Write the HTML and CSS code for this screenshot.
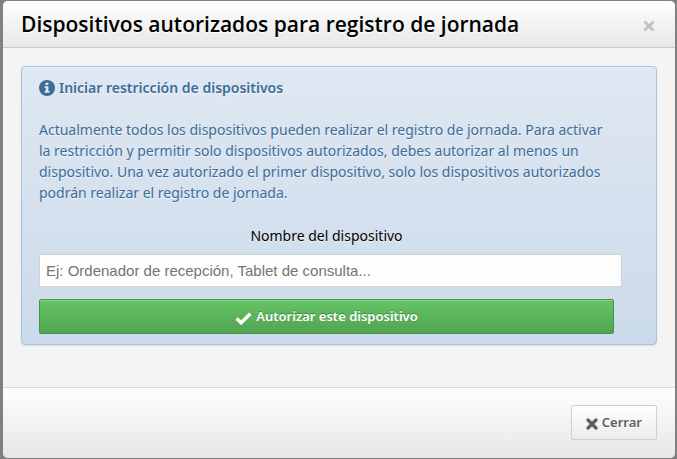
FILE: index.html
```
<!DOCTYPE html>
<html lang="es">
<head>
    <meta charset="UTF-8">
    <meta name="viewport" content="width=device-width, initial-scale=1.0">
    <title>Dispositivos autorizados para registro de jornada</title>
    <link rel="stylesheet" href="styles.css">
</head>
<body>
    <div class="modal" role="dialog" aria-labelledby="modal-title">
        <div class="modal-header">
            <h3 id="modal-title">Dispositivos autorizados para registro de jornada</h3>
            <button type="button" class="close" aria-label="Cerrar ventana">
                <svg width="14" height="12" viewBox="0 0 14 12"><path d="M1.5 1.5l9 9M10.5 1.5l-9 9" fill="none" stroke="currentColor" stroke-width="2.8"/></svg>
            </button>
        </div>
        <div class="modal-body">
            <form class="alert alert-info">
                <h4>
                    <svg class="icon" width="16" height="16" viewBox="0 0 16 16"><circle cx="8" cy="8" r="8" fill="currentColor"/><path d="M6.6 2.8h2.8v2.2H6.6zM5.6 6.3h3.8v4.8h1.1v1.7H5.6v-1.7h1.1V8H5.6z" fill="#dfe8f1"/></svg>
                    Iniciar restricción de dispositivos
                </h4>
                <p>Actualmente todos los dispositivos pueden realizar el registro de jornada. Para activar la restricción y permitir solo dispositivos autorizados, debes autorizar al menos un dispositivo. Una vez autorizado el primer dispositivo, solo los dispositivos autorizados podrán realizar el registro de jornada.</p>
                <label for="device-name">Nombre del dispositivo</label>
                <input type="text" id="device-name" placeholder="Ej: Ordenador de recepción, Tablet de consulta...">
                <button type="button" class="btn btn-success">
                    <svg class="icon" width="17" height="13" viewBox="0 0 17 13"><path d="M1.6 6.4l4.6 4.4L15.3 1.7" fill="none" stroke="currentColor" stroke-width="3.4"/></svg>
                    Autorizar este dispositivo
                </button>
            </form>
        </div>
        <div class="modal-footer">
            <button type="button" class="btn">
                <svg class="icon" width="12" height="12" viewBox="0 0 12 12"><path d="M2 2l8 8M10 2l-8 8" fill="none" stroke="currentColor" stroke-width="3.2" stroke-linecap="round"/></svg>
                Cerrar
            </button>
        </div>
    </div>
</body>
</html>
```
FILE: styles.css
```
* {
    box-sizing: border-box;
}

body {
    margin: 0;
    padding: 1px 2px 1px 3px;
    min-height: 100vh;
    display: flex;
    background: #808080;
    font-family: "Noto Sans", "Open Sans", sans-serif;
    font-size: 14px;
    line-height: 21px;
    color: #000;
}

.modal {
    flex: 1;
    display: flex;
    flex-direction: column;
    background: #f4f4f4;
    border-radius: 5px;
    overflow: hidden;
}

.modal-header {
    display: flex;
    align-items: center;
    justify-content: space-between;
    padding: 8px 18px;
    background: linear-gradient(#fefefe, #e7e7e7);
    border-bottom: 1px solid #c9c9c9;
}

.modal-header h3 {
    margin: 0;
    font-family: "Open Sans", sans-serif;
    font-size: 21px;
    font-weight: 600;
    line-height: 30px;
    text-shadow: 0 1px 0 #fff;
}

.close {
    display: flex;
    margin-top: 3px;
    padding: 0;
    border: 0;
    background: none;
    color: #c2c2c2;
    cursor: pointer;
}

.modal-body {
    flex: 1;
    padding: 18px;
}

.alert {
    display: flex;
    flex-direction: column;
    padding: 10px 42px 10px 17px;
    border: 1px solid #a6c3de;
    border-radius: 4px;
    text-shadow: 0 1px 0 rgba(255, 255, 255, 0.6);
    box-shadow: inset 0 1px 0 rgba(255, 255, 255, 0.3), 0 1px 2px rgba(0, 0, 0, 0.1);
}

.alert-info {
    background: linear-gradient(#dfe8f2, #cbdaea);
    color: #3d6c99;
}

.alert h4 {
    display: flex;
    align-items: center;
    gap: 4px;
    margin: 0;
    font-size: 14px;
    font-weight: 600;
}

.alert p {
    margin: 21px 0;
}

.alert label {
    margin: 1px 0 8px;
    text-align: center;
    color: #000;
}

/* the text box is a little wider than its column */
.alert input {
    height: 33px;
    margin: 0 -8px 12px 0;
    padding: 0 6px;
    border: 1px solid #d2d2d2;
    background: #fdfdfd;
    font-family: "Liberation Sans", Arial, sans-serif;
    font-size: 15px;
}

.alert input::placeholder {
    color: #757575;
    opacity: 1;
}

.btn {
    display: flex;
    align-items: center;
    justify-content: center;
    gap: 4px;
    height: 35px;
    padding: 0 14px;
    border: 1px solid #cfcfcf;
    border-radius: 2px;
    background: linear-gradient(#fefefe, #ececec);
    color: #5e5e5e;
    font-family: inherit;
    font-size: 13px;
    font-weight: 600;
    line-height: 21px;
    text-shadow: 0 1px 0 #fff;
    cursor: pointer;
}

.btn .icon {
    margin-top: 3px;
}

.btn-success {
    border-color: #489348;
    background: linear-gradient(#64c464, #52a352);
    color: #fff;
    text-shadow: 0 -1px 0 rgba(0, 0, 0, 0.3);
    box-shadow: inset 0 1px 0 rgba(255, 255, 255, 0.25);
}

.modal-footer {
    display: flex;
    justify-content: flex-end;
    padding: 17px 18px 18px;
    border-top: 1px solid #d9d9d9;
    background: linear-gradient(#fefefe, #e7e7e7);
}
```
